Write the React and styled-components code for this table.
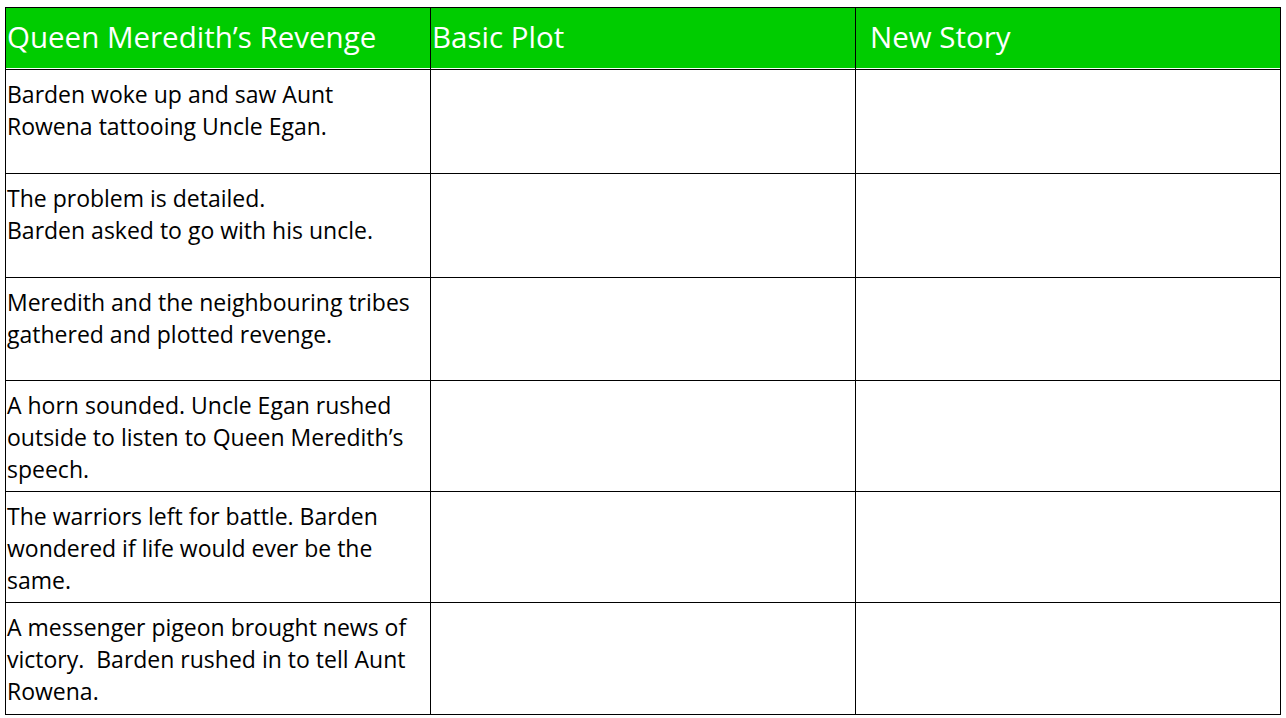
import styled, { createGlobalStyle } from "styled-components"

const GlobalStyle = createGlobalStyle`
    html, body {
        margin: 0;
        padding: 0;
        background: #ffffff;
    }
    body {
        font-family: "Open Sans", "Noto Sans", sans-serif;
    }
`

const linhas = [
    ["Barden woke up and saw Aunt", "Rowena tattooing Uncle Egan."],
    ["The problem is detailed.", "Barden asked to go with his uncle."],
    ["Meredith and the neighbouring tribes", "gathered and plotted revenge."],
    ["A horn sounded. Uncle Egan rushed", "outside to listen to Queen Meredith’s", "speech."],
    ["The warriors left for battle. Barden", "wondered if life would ever be the", "same."],
    ["A messenger pigeon brought news of", "victory.\u00a0 Barden rushed in to tell Aunt", "Rowena."],
]

const alturas = [104, 104, 103, 111, 111, 112]

export default function App() {
    return (
        <>
            <GlobalStyle />
            <Pagina>
                <Tabela>
                    <colgroup>
                        <col style={{ width: 425 }} />
                        <col style={{ width: 425 }} />
                        <col style={{ width: 425 }} />
                    </colgroup>
                    <thead>
                        <tr>
                            <Cabecalho>Queen Meredith’s Revenge</Cabecalho>
                            <Cabecalho>Basic Plot</Cabecalho>
                            <Cabecalho recuo={13}>New Story</Cabecalho>
                        </tr>
                    </thead>
                    <tbody>
                        {linhas.map((texto, i) => (
                            <Linha key={i} altura={alturas[i]}>
                                <Celula>
                                    {texto.map((t, j) => (
                                        <Frase key={j}>{t}</Frase>
                                    ))}
                                </Celula>
                                <Celula />
                                <Celula />
                            </Linha>
                        ))}
                    </tbody>
                </Tabela>
            </Pagina>
        </>
    )
}

const Pagina = styled.div`
    padding: 7px 0 0 5px;
`
const Tabela = styled.table`
    border-collapse: collapse;
    table-layout: fixed;
    width: 1276px;
    border: 1px solid #000;
`
const Cabecalho = styled.th`
    height: 57px;
    padding: 0 0 4px ${(props) => 1 + (props.recuo || 0)}px;
    background-color: #00cc00;
    color: #ffffff;
    border: 1px solid #000;
    box-shadow: inset 0 -1px 0 #ffffff;
    text-align: left;
    vertical-align: middle;
    font-weight: normal;
    font-size: 29.5px;
    line-height: 36px;
`
const Linha = styled.tr`
    height: ${(props) => props.altura}px;
`
const Celula = styled.td`
    border: 1px solid #000;
    padding: 8px 0 0 1px;
    vertical-align: top;
    color: #000;
    font-size: 23px;
    line-height: 32px;
`
const Frase = styled.div`
    white-space: nowrap;
`
